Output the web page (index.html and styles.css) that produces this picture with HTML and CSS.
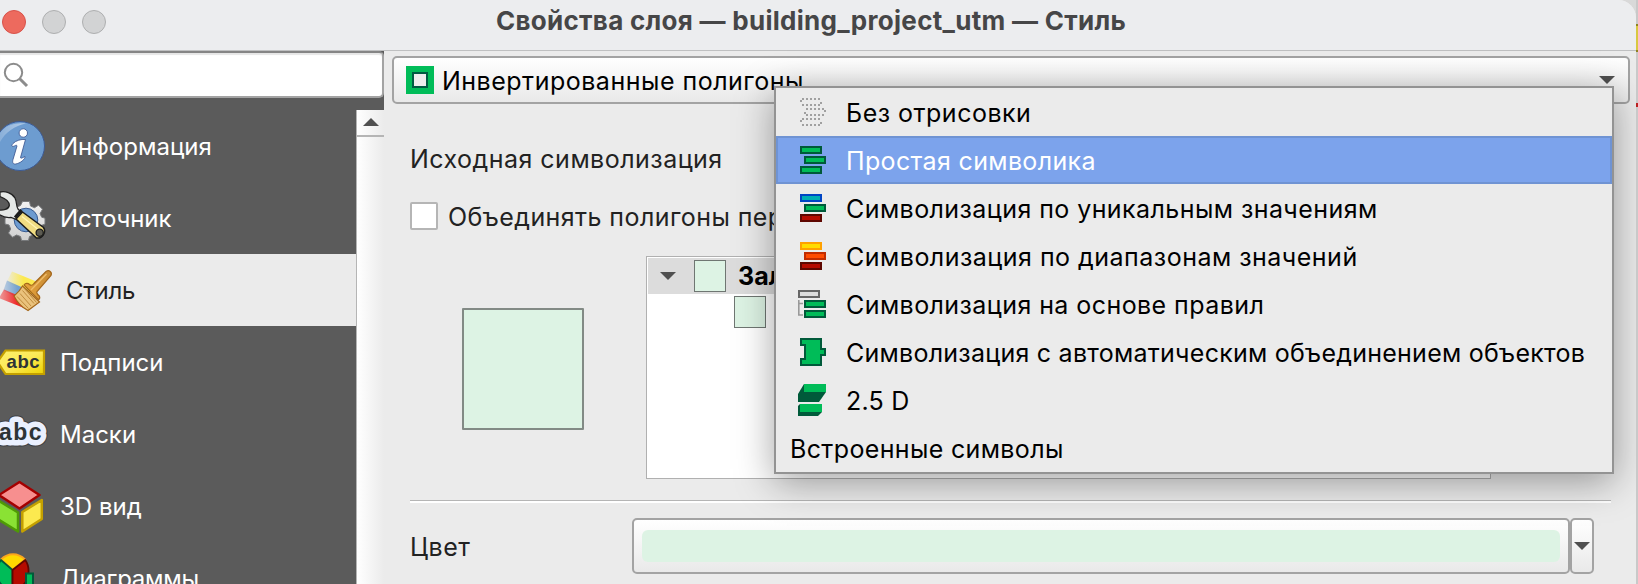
FILE: index.html
```html
<!DOCTYPE html>
<html lang="ru">
<head>
<meta charset="utf-8">
<title>Свойства слоя</title>
<link rel="stylesheet" href="styles.css">
</head>
<body>
<div class="desktop">
<div class="window">
  <header class="titlebar">
    <div class="lights"><span class="light close"></span><span class="light"></span><span class="light"></span></div>
    <h1 class="title">Свойства слоя — building_project_utm — Стиль</h1>
  </header>
  <div class="body">
    <aside class="sidebar">
      <div class="search">
        <svg width="28" height="28" viewBox="0 0 28 28" fill="none" stroke="#8c8c8c"><circle cx="11.5" cy="11.5" r="8.7" stroke-width="2"/><path d="M17.5 17.5L25 25" stroke-width="3"/></svg>
      </div>
      <div class="list">
        <nav class="items">
          <div class="item">
            <svg class="ico" width="54" height="60" viewBox="0 0 54 60">
              <defs><linearGradient id="gl" x1="0" y1="0" x2="1" y2="0"><stop offset="0" stop-color="#fff" stop-opacity=".15"/><stop offset="1" stop-color="#fff" stop-opacity=".5"/></linearGradient></defs>
              <circle cx="20" cy="30" r="24.5" fill="#6d9cd0" stroke="#3c5a95"/>
              <path d="M-4 28C-2 14 8 5.500 26 7.500C14 10 4 17-1 28-2 30-4 30-4 28z" fill="url(#gl)"/>
              <circle cx="23.300" cy="17" r="4.200" fill="#fff" stroke="#36508d" stroke-width=".8"/>
              <path d="M13 27.500C16 24.500 21 23 25.500 23.500L20.500 41.500C20.500 43 23 41.500 25 40.500C25.500 43 20 47.500 15.500 48C12.500 48.200 12.300 46 13 43.500L17 30C16.500 28 14.500 30.500 12.500 30.500C11.500 30 12 28.500 13 27.500z" fill="#fff" stroke="#36508d" stroke-width=".8"/>
            </svg>
            <span class="l-info">Информация</span></div>
          <div class="item">
            <svg class="ico" width="54" height="60" viewBox="0 0 54 60">
              <defs><linearGradient id="gr" x1="0" y1="0" x2="0" y2="1"><stop offset="0" stop-color="#f2f2f2"/><stop offset="1" stop-color="#cfcfcf"/></linearGradient></defs>
              <path d="M22.500 13.500h7l1 4.500 4 1.700 4-2.500 4 4-2.500 4.500 1.700 3.500 3.300 1v6l-4 1.300-1.500 4 2 4-4.500 4-4-2.500-3.500 1.500-1 4h-7l-1-4-4-1.500-4 2.300-4-4.300 2.200-4-1.700-4-4-1v-6l4-1.300 1.700-4-2.200-4 4-4 4 2.500 4-1.700z" fill="url(#gr)" stroke="#77797b" stroke-width="1"/>
              <circle cx="26" cy="32" r="11.800" fill="#6d9bd0" stroke="#375a90" stroke-width="1"/>
              <path d="M0 4C5 3 12 4.500 15 10C17 14 16 18 18 21L22 25L16.500 31.500L11 29.500C7 30 2 29-3 25L-1 22C3 22.500 8.500 21.500 9.300 17.500C9.500 13 5.500 10.500 0 8.500z" fill="#e5e8e6" stroke="#222" stroke-width="1.300"/>
              <path d="M21.500 22L15 29.500" stroke="#1b1b1b" stroke-width="3"/>
              <path d="M22.500 24L43.500 39.500C46.500 44 42.500 51 36.500 50L16 31z" fill="#f0dc82" stroke="#1b1b1b" stroke-width="1.500"/>
              <path d="M22 28.500L40 43" stroke="#fff5b8" stroke-width="1.200"/>
              <circle cx="39.700" cy="44.800" r="3.600" fill="#5c5b52" stroke="#1b1b1b" stroke-width="1.300"/>
            </svg>
            <span class="l-source">Источник</span></div>
          <div class="item active">
            <svg class="ico" width="54" height="60" viewBox="0 0 54 60">
              <defs>
                <linearGradient id="y" x1="0" x2="1"><stop offset="0" stop-color="#fce94f" stop-opacity=".1"/><stop offset=".5" stop-color="#fce94f"/></linearGradient>
                <linearGradient id="b" x1="0" x2="1"><stop offset="0" stop-color="#729fcf" stop-opacity=".4"/><stop offset=".6" stop-color="#729fcf"/></linearGradient>
                <linearGradient id="r" x1="0" x2="1"><stop offset="0" stop-color="#ef2929" stop-opacity=".4"/><stop offset=".6" stop-color="#ef2929"/></linearGradient>
                <linearGradient id="w" x1="0" x2="1"><stop offset="0" stop-color="#e8a43c"/><stop offset="1" stop-color="#c68a35"/></linearGradient>
              </defs>
              <path d="M12 11.500L40 23 30 37 7 21z" fill="url(#y)"/>
              <path d="M7 20.500L28 30 24 42 3.500 30z" fill="url(#b)"/>
              <path d="M4 29.500L24 38 29 50-1 38z" fill="url(#r)"/>
              <path d="M46 11.500C49 9.500 52.500 12 51 15.500L37 31.500C36 33 37 34 39.300 36C40.500 38 39.500 39 38.500 40L24 25C25.500 23 28 23 29.500 24.500C31.500 26 32.500 25.500 34 23.500z" fill="url(#w)" stroke="#a4671b" stroke-width="1.200"/>
              <path d="M22.500 26L39.500 42 28 50.500C23 48 17 42 14 36C17 33.500 20 31 22.500 26z" fill="#eac27c" stroke="#a4671b" stroke-width="1.200"/>
              <path d="M17 36.500l11.500 12M20 33.500l11 12.500M22.500 30.500l11.500 13M24 28l12.500 14.500" stroke="#b98438" stroke-width=".9"/>
              <path d="M46.500 14L31 30" stroke="#f0bd69" stroke-width="1.300"/>
            </svg>
            <span class="l-style">Стиль</span></div>
          <div class="item">
            <svg class="ico" width="54" height="60" viewBox="0 0 54 60">
              <defs><linearGradient id="tg" x1="0" y1="0" x2="1" y2="1"><stop offset="0" stop-color="#fdf06c"/><stop offset=".5" stop-color="#fcea58"/><stop offset="1" stop-color="#edd400"/></linearGradient></defs>
              <path d="M5.500 18.500H44V42H5.500L-2.500 30z" fill="url(#tg)" stroke="#c4a000" stroke-width="2.200"/>
              <text x="6.500" y="35.500" class="abc-tag">abc</text>
            </svg>
            <span class="l-labels">Подписи</span></div>
          <div class="item">
            <svg class="ico" width="54" height="60" viewBox="0 0 54 60">
              <text x="-1" y="35.500" class="abc-edge">abc</text>
              <text x="-1" y="35.500" class="abc-halo">abc</text>
            </svg>
            <span class="l-masks">Маски</span></div>
          <div class="item">
            <svg class="ico" width="54" height="60" viewBox="0 0 54 60" stroke-linejoin="round">
              <path d="M19.500 6L39.500 19 19.500 32.500-1 19z" fill="#f78f8f" stroke="#a40000" stroke-width="2.500"/>
              <path d="M-4 23L18 36.500V55.500L-4 42z" fill="#8ae234" stroke="#4e9a06" stroke-width="2.500"/>
              <path d="M22.300 36L41.800 24V43L22.300 55.500z" fill="#fce94f" stroke="#c4a000" stroke-width="2.500"/>
            </svg>
            <span class="l-3d">3D вид</span></div>
          <div class="item">
            <svg class="ico" width="54" height="60" viewBox="0 0 54 60">
              <path d="M12.500 22L1 11.500C8 4.500 18 4.500 25 11.500z" fill="#ffd900" stroke="#fca61d" stroke-width="1.800"/>
              <path d="M12.500 22L1 12C-5 20-4 34 4 38.500H12.500z" fill="#00bc58" stroke="#005a3a" stroke-width="1.800"/>
              <path d="M12.500 22L25.200 12C31 20 29 34 21 38.500H12.500z" fill="#b50b00" stroke="#5e0700" stroke-width="1.800"/>
              <path d="M26 45V25.500H33V45z" fill="#00bc58" stroke="#005a3a" stroke-width="2"/>
            </svg>
            <span class="l-diag">Диаграммы</span></div>
        </nav>
        <div class="scroll"><div class="scroll-up"><span class="tri up"></span></div></div>
      </div>
    </aside>
    <main class="panel">
      <div class="combo">
        <svg width="28" height="28" viewBox="0 0 28 28"><path d="M0 0h28v28H0z" fill="#00bc58"/><path d="M7 7h14v14H7z" fill="#ececec" stroke="#005a42" stroke-width="2"/></svg>
        <span class="combo-text">Инвертированные полигоны</span>
        <span class="tri"></span>
      </div>
      <div class="source-label">Исходная символизация</div>
      <div class="merge"><span class="check"></span><span class="merge-text">Объединять полигоны пер</span></div>
      <div class="symbol">
        <div class="preview"></div>
        <div class="tree">
          <div class="tree-row root"><span class="tri"></span><span class="swatch"></span><b>Зал</b></div>
          <div class="tree-row child"><span class="swatch"></span></div>
        </div>
      </div>
      <div class="rule"></div>
      <div class="color">
        <span class="color-label">Цвет</span>
        <div class="color-btn"><div class="color-fill"></div></div>
        <div class="color-drop"><span class="tri"></span></div>
      </div>
    </main>
  </div>
  <div class="menu">
    <div class="opt">
      <svg class="mi" width="28" height="28" viewBox="0 0 28 28" fill="none" stroke="#a0a0a0" stroke-width="2" stroke-dasharray="2 2"><path d="M4 1H24M4 7H24M8 11H28M8 17H28M4 21H24M4 27H24"/><path d="M3 2V4M23 4V6M7 14V16M27 12V14M3 22V24M23 24V26" stroke-dasharray="none"/></svg>
      <span class="m1">Без отрисовки</span></div>
    <div class="opt hot">
      <svg class="mi" width="28" height="28" viewBox="0 0 28 28" fill="#00bc58" stroke="#005a3a" stroke-width="2"><path d="M3 1H23V7H3zM7 11H27V17H7zM3 21H23V27H3z"/></svg>
      <span class="m2">Простая символика</span></div>
    <div class="opt">
      <svg class="mi" width="28" height="28" viewBox="0 0 28 28" stroke-width="2"><path d="M3 1H23V7H3z" fill="#00adb5" stroke="#0045c4"/><path d="M7 11H27V17H7z" fill="#00bc58" stroke="#005a3a"/><path d="M3 21H23V27H3z" fill="#b50b00" stroke="#5e0700"/></svg>
      <span class="m3">Символизация по уникальным значениям</span></div>
    <div class="opt">
      <svg class="mi" width="28" height="28" viewBox="0 0 28 28" stroke-width="2"><path d="M3 1H23V7H3z" fill="#ffdc00" stroke="#ffa100"/><path d="M7 11H27V17H7z" fill="#ff4b00" stroke="#c12c00"/><path d="M3 21H23V27H3z" fill="#b50b00" stroke="#5e0700"/></svg>
      <span class="m4">Символизация по диапазонам значений</span></div>
    <div class="opt">
      <svg class="mi" width="28" height="28" viewBox="0 0 28 28" stroke-width="2"><path d="M1 1H21V7H1z" fill="#dcdcdc" stroke="#666"/><path d="M.8 10V25H5M1 13.500H5" fill="none" stroke="#999" stroke-width="1.600"/><path d="M7 11H27V17H7zM7 21H27V27H7z" fill="#00bc58" stroke="#005a3a"/></svg>
      <span class="m5">Символизация на основе правил</span></div>
    <div class="opt">
      <svg class="mi" width="28" height="28" viewBox="0 0 28 28" stroke-width="2"><path d="M3 1H23V11H27V17H23V27H3V21H7V7H3z" fill="#00bc58" stroke="#005a3a"/></svg>
      <span class="m6">Символизация с автоматическим объединением объектов</span></div>
    <div class="opt">
      <svg class="mi" width="28" height="28" viewBox="0 0 28 28"><path d="M6-2L0 8V16H21L28 6z" fill="#005a3a"/><path d="M6-2H28V6H6z" fill="#00bc58"/><path d="M2 18L0 20V30H20L24 26z" fill="#005a3a"/><path d="M2 18H24V26H2z" fill="#00bc58"/></svg>
      <span class="m7">2.5 D</span></div>
    <div class="opt plain"><span class="m8">Встроенные символы</span></div>
  </div>
</div>
<div class="behind"><span class="behind-tab"></span><span class="behind-mark"></span></div>
</div>
</body>
</html>
```
FILE: styles.css
```css
* { box-sizing: border-box; }
body { margin: 0; font: 25px/30px Inter, "Open Sans", sans-serif; color: #222; overflow: hidden; }
.desktop { display: flex; width: 1638px; height: 584px; overflow: hidden; background: #d9d9d9; }
.window { position: relative; width: 1636px; height: 584px; background: #ebebeb; border-top-right-radius: 18px; overflow: hidden; white-space: nowrap; }

.titlebar { height: 51px; display: flex; align-items: flex-start; background: #ecedef; border-bottom: 1px solid #bfc0c1; }
.lights { display: flex; gap: 16px; padding: 10px 0 0 2px; width: 496px; }
.light { width: 24px; height: 24px; border-radius: 50%; background: #d2d3d4; border: 1px solid #aeafb0; }
.light.close { background: #ed6a5e; border-color: #d8524a; }
.title { margin: 6px 0 0; font-size: 26px; line-height: 30px; font-weight: 700; color: #464647; letter-spacing: .29px; }

.body { display: flex; height: 533px; }
.sidebar { width: 384px; background: #5b5b5b; display: flex; flex-direction: column; }
.search { height: 47px; margin-bottom: 12px; background: #fff; border: 2px solid #a3a3a3; border-top-color: #858585; border-left: 0; border-radius: 0 5px 5px 0; padding: 8px 0 0 2px; box-shadow: inset 0 2px 1px #e6e6e6; }
.list { display: flex; height: 474px; overflow: hidden; }
.items { width: 356px; }
.item { height: 72px; display: flex; align-items: center; color: #fff; font-size: 24px; letter-spacing: 0; }
.item span { padding-top: 2px; }
.item.active { background: #ebebeb; color: #222; }
.ico { flex: none; margin-right: 6px; }
.item.active .ico { margin-right: 12px; }
.l-style, .l-diag { letter-spacing: -.25px; }
.l-source { letter-spacing: -.15px; }
.scroll { width: 28px; border-left: 1px solid #b5b5b5; background: linear-gradient(90deg, #fff, #ebebeb); }
.scroll-up { height: 27px; border-bottom: 2px solid #b5b5b5; display: flex; justify-content: center; padding-top: 8px; }
.tri { flex: none; width: 0; height: 0; border: 8px solid transparent; border-top: 8px solid #505050; border-bottom: 0; }
.tri.up { border-top: 0; border-bottom: 8px solid #505050; }
.abc-tag { font: 700 18.5px "Liberation Sans", sans-serif; letter-spacing: .6px; fill: #2e3436; }
.abc-halo, .abc-edge { font: 700 23px "Liberation Sans", sans-serif; letter-spacing: 1.5px; fill: #2e3436; stroke: #eaf0ff; stroke-width: 11px; stroke-linejoin: round; paint-order: stroke; }
.abc-edge { stroke: #3a3d42; stroke-width: 13px; }

.panel { flex: 1; padding: 5px 6px 0 8px; }
.combo { height: 48px; border: 2px solid #a3a3a3; border-radius: 5px; background: linear-gradient(#fff, #e9e9e9); display: flex; align-items: center; padding: 0 13px 0 12px; color: #000; }
.combo-text { flex: 1; margin-left: 8px; padding-top: 2px; letter-spacing: .5px; }
.source-label { margin: 40px 0 0 18px; height: 30px; letter-spacing: .48px; }
.merge { display: flex; align-items: center; gap: 10px; margin: 27px 0 0 18px; height: 30px; letter-spacing: .42px; }
.merge-text { padding-top: 2px; }
.check { width: 28px; height: 28px; background: #fff; border: 2px solid #b5b5b5; border-radius: 2px; }
.symbol { display: flex; margin: 25px 0 0 70px; height: 223px; }
.preview { width: 122px; height: 122px; margin: 52px 62px 0 0; background: #ddf3e4; border: 2px solid #828a85; border-radius: 1px; }
.tree { width: 845px; height: 223px; background: #fff; border: 1px solid #b0b0b0; padding: 1px; }
.tree-row { display: flex; align-items: center; height: 36px; color: #000; }
.tree-row.root { background: #dcdcdc; padding-left: 12px; }
.tree-row.child { padding-left: 86px; }
.swatch { width: 32px; height: 32px; background: #ddf3e4; border: 1px solid #6f7672; }
.root .swatch { margin: 0 12px 0 18px; }
.rule { height: 3px; margin: 21px 19px 0 18px; border-top: 1px solid #b5b5b5; background: #fff; }
.color { display: flex; margin: 15px 0 0 18px; height: 56px; align-items: center; }
.color-label { width: 222px; padding-top: 2px; letter-spacing: .5px; }
.color-btn { width: 938px; height: 56px; border: 2px solid #a3a3a3; border-radius: 5px; background: linear-gradient(#fff, #e9e9e9); padding: 10px 8px; }
.color-fill { height: 32px; border-radius: 6px; background: #ddf3e4; }
.color-drop { width: 24px; height: 56px; border: 2px solid #a3a3a3; border-radius: 5px; background: linear-gradient(#fff, #e9e9e9); display: flex; align-items: center; justify-content: center; }

/* Popup list of renderers, opened over the combo box */
.menu { position: absolute; left: 774px; top: 86px; width: 840px; height: 388px; border: 2px solid #939393; background: #ebebeb; color: #000; box-shadow: 0 8px 36px rgba(0, 0, 0, .36); }
.opt { height: 48px; display: flex; align-items: center; padding-left: 22px; }
.opt.hot { background: #7ca3ec; border: 2px solid #6f93d3; color: #fff; padding-left: 20px; }
.opt.plain { padding-left: 14px; }
.mi { flex: none; margin-right: 20px; overflow: visible; }
.opt span { padding-top: 2px; }
.m1, .m4 { letter-spacing: .49px; }
.m2, .m8 { letter-spacing: .35px; }
.m3, .m5 { letter-spacing: .43px; }
.m6, .m7 { letter-spacing: .25px; }

.behind { width: 2px; background: #c9c9c9; padding-top: 24px; }
.behind-tab { display: block; height: 28px; background: #d8c840; border: solid #8f8420; border-width: 2px 0; }
.behind-mark { display: block; height: 4px; margin-top: 51px; background: #b22; }
```
